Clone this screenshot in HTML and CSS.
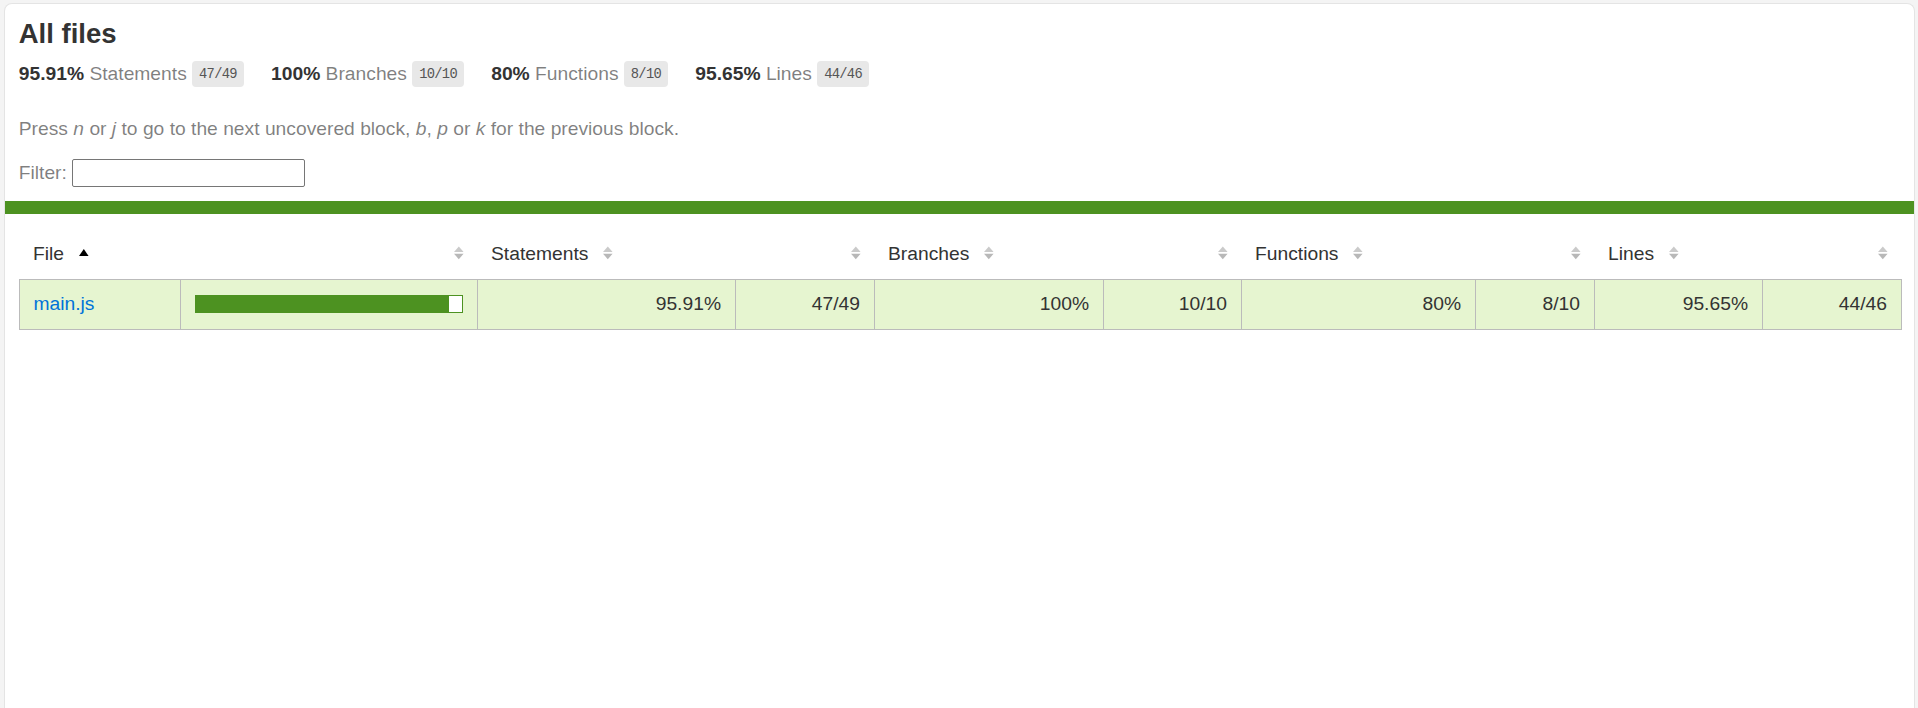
FILE: index.html
```html
<!DOCTYPE html>
<html lang="en">
<head>
<meta charset="utf-8">
<title>Code coverage report for All files</title>
<link rel="stylesheet" href="styles.css">
</head>
<body>
<div class="card">
  <div class="pad1">
    <h1>All files</h1>
    <div class="stats">
      <div class="stat"><span class="strong">95.91% </span><span class="quiet">Statements</span> <span class="fraction">47/49</span></div>
      <div class="stat"><span class="strong">100% </span><span class="quiet">Branches</span> <span class="fraction">10/10</span></div>
      <div class="stat"><span class="strong">80% </span><span class="quiet">Functions</span> <span class="fraction">8/10</span></div>
      <div class="stat"><span class="strong">95.65% </span><span class="quiet">Lines</span> <span class="fraction">44/46</span></div>
    </div>
    <p class="quiet">Press <em>n</em> or <em>j</em> to go to the next uncovered block, <em>b</em>, <em>p</em> or <em>k</em> for the previous block.</p>
    <div class="quiet filter">Filter: <input type="search" class="search"></div>
  </div>
  <div class="status-line"></div>
  <div class="pad1 table-wrap">
    <table class="coverage-summary">
      <colgroup>
        <col class="w-file"><col class="w-pic"><col class="w-spct"><col class="w-sabs"><col class="w-bpct"><col class="w-babs"><col class="w-fpct"><col class="w-fabs"><col class="w-lpct"><col class="w-labs">
      </colgroup>
      <thead>
        <tr>
          <th class="file">File <span class="sorter"><svg viewBox="0 0 7 10" width="9.6" height="13.75"><polygon points="0,7.3 3.5,2.1 7,7.3" fill="#000"/></svg></span></th>
          <th class="pic"><span class="sorter"><svg viewBox="0 0 7 10" width="9.6" height="13.75"><polygon points="0,4.4 3.5,0.4 7,4.4" fill="#cacaca"/><polygon points="0,5.6 3.5,9.6 7,5.6" fill="#b8b8b8"/></svg></span></th>
          <th class="pct">Statements <span class="sorter"><svg viewBox="0 0 7 10" width="9.6" height="13.75"><polygon points="0,4.4 3.5,0.4 7,4.4" fill="#cacaca"/><polygon points="0,5.6 3.5,9.6 7,5.6" fill="#b8b8b8"/></svg></span></th>
          <th class="abs"><span class="sorter"><svg viewBox="0 0 7 10" width="9.6" height="13.75"><polygon points="0,4.4 3.5,0.4 7,4.4" fill="#cacaca"/><polygon points="0,5.6 3.5,9.6 7,5.6" fill="#b8b8b8"/></svg></span></th>
          <th class="pct">Branches <span class="sorter"><svg viewBox="0 0 7 10" width="9.6" height="13.75"><polygon points="0,4.4 3.5,0.4 7,4.4" fill="#cacaca"/><polygon points="0,5.6 3.5,9.6 7,5.6" fill="#b8b8b8"/></svg></span></th>
          <th class="abs"><span class="sorter"><svg viewBox="0 0 7 10" width="9.6" height="13.75"><polygon points="0,4.4 3.5,0.4 7,4.4" fill="#cacaca"/><polygon points="0,5.6 3.5,9.6 7,5.6" fill="#b8b8b8"/></svg></span></th>
          <th class="pct">Functions <span class="sorter"><svg viewBox="0 0 7 10" width="9.6" height="13.75"><polygon points="0,4.4 3.5,0.4 7,4.4" fill="#cacaca"/><polygon points="0,5.6 3.5,9.6 7,5.6" fill="#b8b8b8"/></svg></span></th>
          <th class="abs"><span class="sorter"><svg viewBox="0 0 7 10" width="9.6" height="13.75"><polygon points="0,4.4 3.5,0.4 7,4.4" fill="#cacaca"/><polygon points="0,5.6 3.5,9.6 7,5.6" fill="#b8b8b8"/></svg></span></th>
          <th class="pct">Lines <span class="sorter"><svg viewBox="0 0 7 10" width="9.6" height="13.75"><polygon points="0,4.4 3.5,0.4 7,4.4" fill="#cacaca"/><polygon points="0,5.6 3.5,9.6 7,5.6" fill="#b8b8b8"/></svg></span></th>
          <th class="abs"><span class="sorter"><svg viewBox="0 0 7 10" width="9.6" height="13.75"><polygon points="0,4.4 3.5,0.4 7,4.4" fill="#cacaca"/><polygon points="0,5.6 3.5,9.6 7,5.6" fill="#b8b8b8"/></svg></span></th>
        </tr>
      </thead>
      <tbody>
        <tr class="high">
          <td class="file"><a href="#">main.js</a></td>
          <td class="pic"><div class="chart"><div class="cover-fill" style="width: 95%"></div><div class="cover-empty" style="width: 5%"></div></div></td>
          <td class="pct">95.91%</td>
          <td class="abs">47/49</td>
          <td class="pct">100%</td>
          <td class="abs">10/10</td>
          <td class="pct">80%</td>
          <td class="abs">8/10</td>
          <td class="pct">95.65%</td>
          <td class="abs">44/46</td>
        </tr>
      </tbody>
    </table>
  </div>
</div>
</body>
</html>
```

FILE: styles.css
```css
* { box-sizing: border-box; }

html, body {
  margin: 0;
  padding: 0;
  height: 100%;
  overflow: hidden;
}

body {
  background: #f4f4f4;
  padding: 3px 3px 0 4px;
  font-family: "Liberation Sans", Arial, sans-serif;
  font-size: 19.25px;
  color: #333;
}

.card {
  background: #fff;
  border: 1px solid #e4e4e4;
  border-bottom: none;
  border-radius: 8px 8px 0 0;
  min-height: calc(100vh - 3px);
  overflow: hidden;
}

.pad1 { padding: 13.75px; }

.table-wrap { padding-top: 14.75px; }

h1 {
  font-size: 27.5px;
  margin: 0;
  font-weight: bold;
}

.stats { display: flex; }

.stat { padding: 12.75px 27px 13.75px 0; }

.strong { font-weight: bold; }

.quiet { color: rgba(0, 0, 0, 0.5); }

.fraction {
  font-family: "Liberation Mono", Consolas, monospace;
  font-size: 13.75px;
  letter-spacing: -0.69px;
  color: #555;
  background: #e8e8e8;
  padding: 5.5px 7.2px 5.5px 6.9px;
  border-radius: 4px;
  vertical-align: middle;
}

p { margin: 19.25px 0; }

.search {
  width: 233px;
  height: 28px;
  border: 1px solid #767676;
  border-radius: 2px;
  font-size: 18px;
  padding: 1px 3px;
  background: #fff;
  vertical-align: baseline;
  margin: 0;
}

.status-line {
  height: 13.75px;
  background: rgb(77, 146, 33);
}

.coverage-summary {
  border-collapse: collapse;
  width: 100%;
  table-layout: fixed;
}

.w-file { width: 161px; }
.w-pic { width: 297px; }
.w-spct { width: 258px; }
.w-sabs { width: 139px; }
.w-bpct { width: 229px; }
.w-babs { width: 138px; }
.w-fpct { width: 234px; }
.w-fabs { width: 119px; }
.w-lpct { width: 168px; }
.w-labs { width: 139px; }

.coverage-summary tr { border-bottom: 1px solid #bbb; }
.coverage-summary tbody { border: 1px solid #bbb; }

.coverage-summary td,
.coverage-summary th { padding: 13.75px; }

.coverage-summary td { border-right: 1px solid #bbb; }
.coverage-summary td:last-child { border-right: none; }

.coverage-summary th {
  text-align: left;
  font-weight: normal;
  white-space: nowrap;
}

.coverage-summary th.pic,
.coverage-summary th.abs,
.coverage-summary td.pct,
.coverage-summary td.abs { text-align: right; }

.coverage-summary td.file { white-space: nowrap; }

.sorter {
  display: inline-block;
  width: 9.6px;
  height: 13.75px;
  margin-left: 0.5em;
  line-height: 0;
}

.sorter svg { display: block; }

.high { background: rgb(230, 245, 208); }

a {
  color: #0074d9;
  text-decoration: none;
}

.chart {
  line-height: 0;
  border: 1px solid rgb(77, 146, 33);
  display: flex;
}

.cover-fill,
.cover-empty {
  height: 16px;
}

.cover-fill { background: rgb(77, 146, 33); }
.cover-empty { background: #fff; }
```
